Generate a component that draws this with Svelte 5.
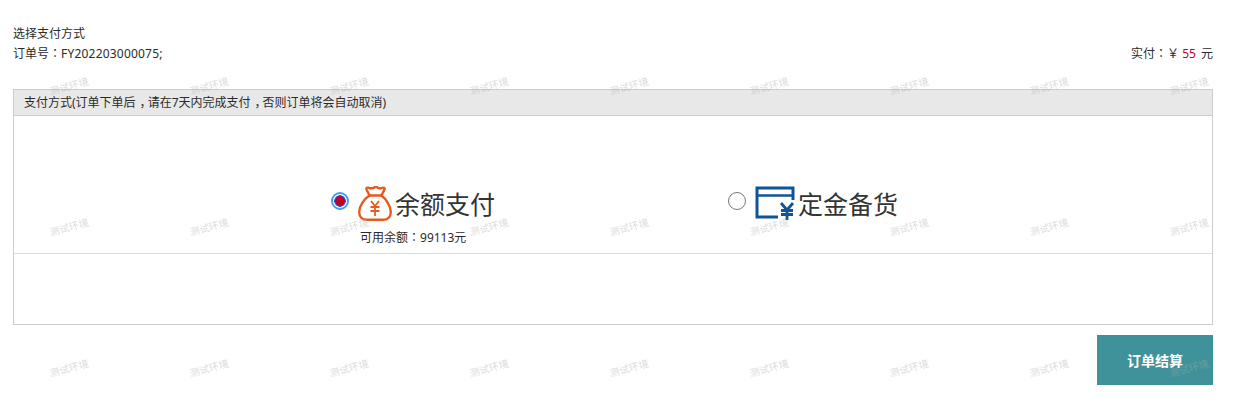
<script lang="ts">
  const methods = [
    { id: 'balance', label: '余额支付', checked: true },
    { id: 'deposit', label: '定金备货', checked: false }
  ];

  // 3 rows x 9 columns of the test-environment stamp
  const marks = Array.from({ length: 27 }, (_, i) => i);
</script>

<div class="page">
  <div class="head">
    <div class="head-left">
      <p class="title">选择支付方式</p>
      <p class="order">订单号<span class="colon">：</span><span class="order-no">FY202203000075;</span></p>
    </div>
    <p class="paid">实付<span class="colon">：</span>￥ <span class="amount">55</span> 元</p>
  </div>

  <div class="panel">
    <div class="panel-header">支付方式(订单下单后<span class="comma">，</span>请在7天内完成支付<span class="comma">，</span>否则订单将会自动取消)</div>
    <div class="methods">
      {#each methods as m}
        <div class="method">
          <label class="method-row">
            <input type="radio" name="pay" checked={m.checked} />
            {#if m.id === 'balance'}
              <svg class="icon-bag" viewBox="0 0 34 35" width="34" height="35" fill="none" stroke="#e8591c" stroke-width="2.4" stroke-linecap="round" stroke-linejoin="round">
                <path d="M11.5 9.5 L8.5 3.5 C8 2 9.5 1.2 11 1.8 C13 2.6 14 2.8 16 1.6 C17.5 0.8 18.8 0.8 20 1.8 C21.5 2.8 23 2.6 24.5 1.8 C26 1.2 27 2.2 26.4 3.6 L23.5 9.5" />
                <path d="M11.5 9.5 H23.5" />
                <path d="M11.5 9.5 C6 13 1.2 20 1.2 26 C1.2 31 4.5 33.8 9 33.8 H25 C29.5 33.8 32.8 31 32.8 26 C32.8 20 28 13 23.5 9.5" />
                <path d="M13 15 L17 20 L21 15 M12.5 21 H21.5 M12.5 25 H21.5 M17 20 V30" stroke-width="1.8" stroke-linecap="butt" />
              </svg>
            {:else}
              <svg class="icon-card" viewBox="0 0 40 34" width="40" height="34" fill="none" stroke="#0f5496" stroke-width="3">
                <path d="M38 14 V2 H2 V31 H23" />
                <path d="M2 9.5 H38" stroke-width="2.4" />
                <path d="M26 17 L32 24 L38 17 M26 24.5 H38 M26 28.5 H38 M32 24 V34" stroke-width="2.8" />
              </svg>
            {/if}
            <span class="method-label">{m.label}</span>
          </label>
          {#if m.id === 'balance'}
            <p class="method-note">可用余额<span class="colon">：</span>99113元</p>
          {/if}
        </div>
      {/each}
    </div>
    <div class="panel-empty"></div>
  </div>

  <div class="footer">
    <button type="button" class="submit">订单结算</button>
  </div>

  <div class="stamps" aria-hidden="true">
    {#each marks as i}
      <span class="stamp">测试环境</span>
    {/each}
  </div>
</div>

<style>
  :global(body) {
    margin: 0;
    background: #fff;
  }

  .page {
    position: relative;
    width: 1255px;
    height: 418px;
    overflow: hidden;
    padding: 24px 42px 0 13px;
    box-sizing: border-box;
    font-family: "Noto Sans", "Noto Sans CJK SC", sans-serif;
    font-size: 12px;
    color: #2b2b2b;
  }

  p {
    margin: 0;
  }

  .head {
    display: flex;
    justify-content: space-between;
    align-items: flex-end;
    height: 40px;
    margin-bottom: 25px;
  }

  .title,
  .order,
  .paid {
    line-height: 20px;
  }

  /* centred full-width punctuation, the SC glyphs sit at the left of the box */
  .colon {
    font-family: "Noto Sans CJK TC", sans-serif;
    line-height: 1;
  }

  .comma {
    padding-left: 4px;
    letter-spacing: -4px;
  }

  .order-no {
    letter-spacing: 0.2px;
  }

  .amount {
    color: #c40025;
    margin: 0 2px 0 0;
  }

  .panel {
    border: 1px solid #ccc;
  }

  .panel-header {
    height: 25px;
    line-height: 26px;
    padding-left: 10px;
    background: #e8e8e8;
    border-bottom: 1px solid #ccc;
  }

  .methods {
    display: flex;
    height: 138px;
    padding: 70px 0 0 317px;
    box-sizing: border-box;
    border-bottom: 1px solid #ddd;
  }

  .method {
    width: 397px;
  }

  .method-row {
    display: flex;
    align-items: center;
    height: 36px;
  }

  input[type='radio'] {
    appearance: none;
    width: 18px;
    height: 18px;
    margin: 0 9px 6px 0;
    border: 1px solid #777;
    border-radius: 50%;
    background: #fff;
    box-sizing: border-box;
  }

  input[type='radio']:checked {
    border: 2px solid #4a9cf0;
    background: radial-gradient(circle, #c40025 0 4.5px, #1a56d6 5px 5.5px, #fff 6px);
  }

  .icon-bag {
    margin: 0 3px 1px 0;
  }

  .icon-card {
    margin: 0 3px 3px 0;
  }

  .method-label {
    font-size: 25px;
    line-height: 36px;
    color: #333;
  }

  .method-note {
    margin: 6px 0 0 29px;
    line-height: 20px;
  }

  .panel-empty {
    height: 70px;
  }

  .footer {
    display: flex;
    justify-content: flex-end;
    margin-top: 10px;
  }

  .submit {
    width: 116px;
    height: 50px;
    border: 0;
    padding: 0;
    background: #3f9299;
    color: #fff;
    font-family: inherit;
    font-size: 14px;
    font-weight: 700;
  }

  .stamps {
    position: absolute;
    top: 66px;
    left: -1px;
    display: grid;
    grid-template-columns: repeat(9, 140px);
    grid-auto-rows: 141px;
    pointer-events: none;
  }

  .stamp {
    justify-self: center;
    height: 40px;
    line-height: 40px;
    font-size: 10px;
    color: rgba(170, 170, 170, 0.45);
    transform: rotate(-15deg);
    white-space: nowrap;
  }
</style>
